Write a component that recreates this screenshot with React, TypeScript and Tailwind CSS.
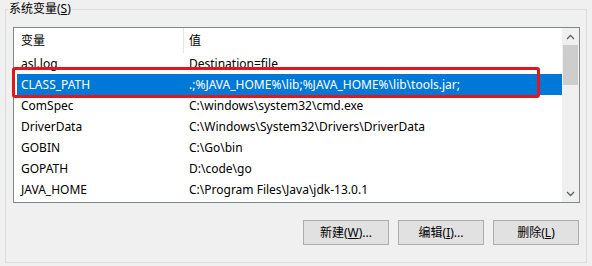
import React from "react";

const rows: [string, string][] = [
  ["asl.log", "Destination=file"],
  ["CLASS_PATH", ".;%JAVA_HOME%\\lib;%JAVA_HOME%\\lib\\tools.jar;"],
  ["ComSpec", "C:\\windows\\system32\\cmd.exe"],
  ["DriverData", "C:\\Windows\\System32\\Drivers\\DriverData"],
  ["GOBIN", "C:\\Go\\bin"],
  ["GOPATH", "D:\\code\\go"],
  ["JAVA_HOME", "C:\\Program Files\\Java\\jdk-13.0.1"],
];

const font = { fontFamily: '"Noto Sans", "Noto Sans CJK SC", sans-serif' };

function Btn({ children }: { children: React.ReactNode }) {
  return (
    <div className="w-[86px] h-[25px] bg-[#e1e1e1] border border-[#adadad] flex items-center justify-center text-[12px] text-black">
      {children}
    </div>
  );
}

export default function App() {
  return (
    <div className="w-[592px] h-[266px] bg-[#f0f0f0] relative overflow-hidden" style={font}>
      <div className="absolute left-[5px] top-[9px] w-[582px] h-[254px] border border-[#dcdcdc]" />
      <div className="relative pl-[13px] pr-[12px]">
        <div className="h-[27px] relative">
          <span className="absolute left-[-5px] top-[0px] bg-[#f0f0f0] pl-[1px] pr-[1px] text-[12px] leading-[18px] text-black">
            系统变量(<span className="underline">S</span>)
          </span>
        </div>
        <div className="w-[567px] h-[176px] border border-[#828790] bg-white flex">
          <div className="flex-1 flex flex-col text-[12px] text-black">
            <div className="h-[25px] flex items-center">
              <div className="w-[170px] h-full flex items-center pl-[7px] border-r border-[#e5e5e5]">变量</div>
              <div className="pl-[5px]">值</div>
            </div>
            {rows.map(([k, v], i) => {
              const sel = i === 1;
              return (
                <div
                  key={k}
                  className={
                    "h-[21px] flex items-center ml-[3px] " +
                    (sel ? "bg-[#0078d7] text-white" : "")
                  }
                >
                  <div className="w-[172px] pl-[4px] whitespace-nowrap">{k}</div>
                  <div className="whitespace-nowrap">{v}</div>
                </div>
              );
            })}
          </div>
          <div className="w-[17px] bg-[#f0f0f0] flex flex-col items-center">
            <div className="h-[17px] flex items-center justify-center">
              <svg width="9" height="6" viewBox="0 0 9 6">
                <path d="M1 5 L4.5 1.5 L8 5" stroke="#606060" strokeWidth="1.3" fill="none" />
              </svg>
            </div>
            <div className="w-[15px] h-[40px] bg-[#cdcdcd]" />
            <div className="flex-1" />
            <div className="h-[17px] flex items-center justify-center">
              <svg width="9" height="6" viewBox="0 0 9 6">
                <path d="M1 1 L4.5 4.5 L8 1" stroke="#606060" strokeWidth="1.3" fill="none" />
              </svg>
            </div>
          </div>
        </div>
        <div className="flex justify-end gap-[9px] mt-[17px] pr-[1px]">
          <Btn>新建(<span className="underline">W</span>)...</Btn>
          <Btn>编辑(<span className="underline">I</span>)...</Btn>
          <Btn>删除(<span className="underline">L</span>)</Btn>
        </div>
      </div>
      <div className="absolute left-[12px] top-[67px] w-[528px] h-[31px] border-[3px] border-[#e3161b] rounded-[3px]" />
    </div>
  );
}
